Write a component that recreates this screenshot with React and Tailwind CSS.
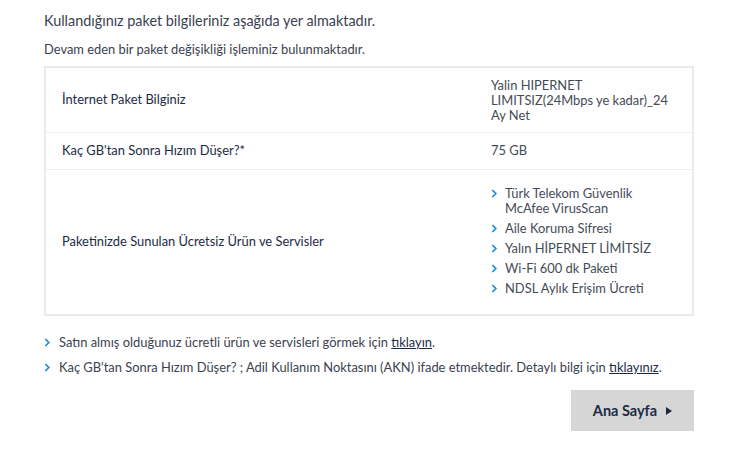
import React from "react";

const Chevron = ({ className = "" }) => (
  <svg viewBox="0 0 8 10" className={`w-[7px] h-[9px] shrink-0 ${className}`}>
    <path d="M1.5 1l4 4-4 4" fill="none" stroke="#1a8fd6" strokeWidth="2" />
  </svg>
);

const services = [
  ["Türk Telekom Güvenlik", "McAfee VirusScan"],
  ["Aile Koruma Sifresi"],
  ["Yalın HİPERNET LİMİTSİZ"],
  ["Wi-Fi 600 dk Paketi"],
  ["NDSL Aylık Erişim Ücreti"],
];

export default function App() {
  return (
    <div className="bg-white min-h-screen text-[#1c2b45]" style={{ fontFamily: "Lato, 'Open Sans', sans-serif" }}>
      <div className="w-[650px] ml-[44px] pt-[12px]">
        <h1 className="text-[14.4px] leading-[18px] text-[#3a4250]">Kullandığınız paket bilgileriniz aşağıda yer almaktadır.</h1>
        <p className="text-[12.9px] leading-[16px] mt-[11px] text-[#3a4250]">Devam eden bir paket değişikliği işleminiz bulunmaktadır.</p>

        <div className="mt-[9px] border-2 border-[#ebebeb] text-[12.9px]">
          <div className="flex items-center h-[65px] border-b border-[#ededed]">
            <div className="w-[445px] pl-[16px]">İnternet Paket Bilginiz</div>
            <div className="w-[185px] leading-[15px] text-[#444b57]">Yalin HIPERNET LIMITSIZ(24Mbps ye kadar)_24 Ay Net</div>
          </div>
          <div className="flex items-center h-[37px] border-b border-[#ededed]">
            <div className="w-[445px] pl-[16px]">Kaç GB'tan Sonra Hızım Düşer?*</div>
            <div className="text-[#444b57]">75 GB</div>
          </div>
          <div className="flex items-center h-[144px]">
            <div className="w-[445px] pl-[16px]">Paketinizde Sunulan Ücretsiz Ürün ve Servisler</div>
            <ul className="flex flex-col gap-[5px] text-[#444b57] -mt-[2px]">
              {services.map((s) => (
                <li key={s[0]} className="flex items-start gap-[7px] leading-[15px]">
                  <Chevron className="mt-[3px]" />
                  <span>
                    {s.map((l) => (
                      <span key={l} className="block">{l}</span>
                    ))}
                  </span>
                </li>
              ))}
            </ul>
          </div>
        </div>

        <div className="mt-[19px] flex flex-col gap-[10px] text-[12.9px] text-[#3a4250]">
          <p className="flex items-center gap-[8px] leading-[15px]">
            <Chevron />
            <span>
              Satın almış olduğunuz ücretli ürün ve servisleri görmek için{" "}
              <a className="underline text-[#1c2b45]">tıklayın</a>.
            </span>
          </p>
          <p className="flex items-center gap-[8px] leading-[15px]">
            <Chevron />
            <span>
              Kaç GB'tan Sonra Hızım Düşer? ; Adil Kullanım Noktasını (AKN) ifade etmektedir. Detaylı bilgi için{" "}
              <a className="underline text-[#1c2b45]">tıklayınız</a>.
            </span>
          </p>
        </div>

        <div className="flex justify-end mt-[15px]">
          <button className="w-[123px] h-[41px] bg-[#d6d6d6] flex items-center justify-center gap-[9px] text-[14.5px] font-bold text-[#1c2b45]">
            Ana Sayfa
            <svg viewBox="0 0 6 8" className="w-[6px] h-[8px]">
              <path d="M0 0l6 4-6 4z" fill="#1c2b45" />
            </svg>
          </button>
        </div>
      </div>
    </div>
  );
}
